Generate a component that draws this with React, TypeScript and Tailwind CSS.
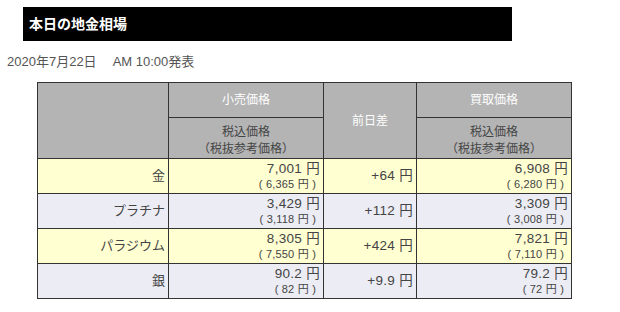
import React from 'react';

type Row = {
  name: string;
  sell: string;
  sellEx: string;
  diff: string;
  buy: string;
  buyEx: string;
  bg: string;
};

const rows: Row[] = [
  { name: '金', sell: '7,001', sellEx: '6,365', diff: '+64', buy: '6,908', buyEx: '6,280', bg: 'bg-[#ffffd2]' },
  { name: 'プラチナ', sell: '3,429', sellEx: '3,118', diff: '+112', buy: '3,309', buyEx: '3,008', bg: 'bg-[#ecedf4]' },
  { name: 'パラジウム', sell: '8,305', sellEx: '7,550', diff: '+424', buy: '7,821', buyEx: '7,110', bg: 'bg-[#ffffd2]' },
  { name: '銀', sell: '90.2', sellEx: '82', diff: '+9.9', buy: '79.2', buyEx: '72', bg: 'bg-[#ecedf4]' },
];

function Price({ main, sub }: { main: string; sub: string }) {
  return (
    <div className="flex flex-col items-end leading-none">
      <span className="text-[13.5px] pr-[3px] tracking-[0.3px]">{main} 円</span>
      <span className="text-[11px] pr-[7px] mt-[3px] tracking-[0.2px]">( {sub} 円 )</span>
    </div>
  );
}

export default function App() {
  const cell = 'border border-[#333]';
  return (
    <div className="w-[620px] h-[312px] bg-white text-[#444] font-['Liberation_Sans','Noto_Sans_CJK_JP',sans-serif]">
      {/* Title */}
      <div className="pt-[7px] pl-[23px] pr-[108px]">
        <div className="h-[34px] bg-black flex items-center pl-[6px]">
          <h1 className="text-white font-bold text-[14px]">本日の地金相場</h1>
        </div>
      </div>

      <p className="mt-[14px] pl-[7px] text-[13px] text-[#555] leading-none flex">
        <span>2020年7月22日</span>
        <span className="ml-[16px]">AM 10:00発表</span>
      </p>

      {/* Table */}
      <table className="ml-[37px] mt-[14px] border-collapse table-fixed w-[534px]">
        <colgroup>
          <col className="w-[131px]" />
          <col className="w-[155px]" />
          <col className="w-[93px]" />
          <col className="w-[155px]" />
        </colgroup>
        <thead className="bg-[#b4b4b4] text-[12px]">
          <tr className="h-[35px]">
            <th rowSpan={2} className={cell}></th>
            <th className={`${cell} text-white font-normal`}>小売価格</th>
            <th rowSpan={2} className={`${cell} text-white font-normal`}>前日差</th>
            <th className={`${cell} text-white font-normal`}>買取価格</th>
          </tr>
          <tr className="h-[41px]">
            <th className={`${cell} font-normal text-[#444] leading-[17px] pt-[5px]`}>
              税込価格<br />（税抜参考価格）
            </th>
            <th className={`${cell} font-normal text-[#444] leading-[17px] pt-[5px]`}>
              税込価格<br />（税抜参考価格）
            </th>
          </tr>
        </thead>
        <tbody>
          {rows.map((r) => (
            <tr key={r.name} className={`h-[35px] ${r.bg}`}>
              <td className={`${cell} text-right text-[13px] pr-[3px]`}>{r.name}</td>
              <td className={cell}>
                <Price main={r.sell} sub={r.sellEx} />
              </td>
              <td className={`${cell} text-right text-[13.5px] pr-[3px] tracking-[0.3px]`}>{r.diff} 円</td>
              <td className={cell}>
                <Price main={r.buy} sub={r.buyEx} />
              </td>
            </tr>
          ))}
        </tbody>
      </table>
    </div>
  );
}
